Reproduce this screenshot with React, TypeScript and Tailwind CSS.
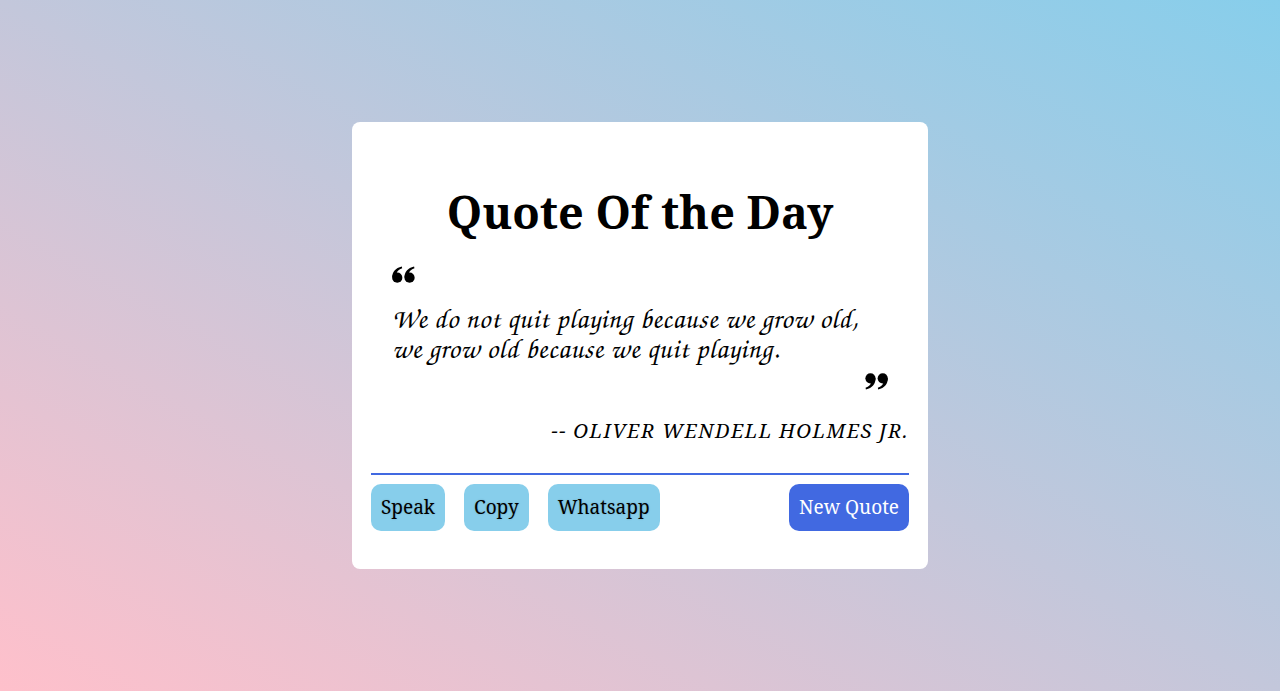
const serif = "font-['Noto_Serif','DejaVu_Serif',serif]";

// two "6" shaped blobs; flipped for the closing mark
const QuoteMark = ({ closing }: { closing?: boolean }) => (
	<svg
		viewBox="0 0 24 18"
		className={`w-[23px] h-[17px] ${closing ? "rotate-180" : ""}`}
		fill="currentColor"
	>
		<circle cx="5.4" cy="12.4" r="5.4" />
		<path d="M0 12.4 C0 6.5 3.5 2 10.2 0.6 L10.6 2.4 C7 3.6 5.2 5.6 4.8 7.6 Z" />
		<circle cx="18.4" cy="12.4" r="5.4" />
		<path d="M13 12.4 C13 6.5 16.5 2 23.2 0.6 L23.6 2.4 C20 3.6 18.2 5.6 17.8 7.6 Z" />
	</svg>
);

const ActionButton = ({ label, primary }: { label: string; primary?: boolean }) => (
	<button
		className={`h-[47px] px-[10px] rounded-[10px] text-[19px] ${serif} ${
			primary
				? "bg-[#4169e1] text-white"
				: "bg-[#87ceeb] text-black [text-shadow:0_0_2px_rgba(0,0,0,0.2)]"
		}`}
	>
		{label}
	</button>
);

export default function App() {
	return (
		<div className="min-h-[691px] w-full flex items-center justify-center bg-[linear-gradient(to_top_right,#ffc0cb,#87ceeb)]">
			<div className="w-[576px] bg-white rounded-[8px] px-[19px] pt-[58px] pb-[38px]">
				<h1 className={`text-center font-bold text-[45px] leading-[64px] text-black ${serif}`}>
					Quote Of the Day
				</h1>
				<div className="px-[21px] mt-[22px]">
					<QuoteMark />
					<p className="mt-[20px] text-[28px] leading-[30px] tracking-[0.6px] font-['TeX_Gyre_Chorus',cursive] text-black">
						We do not quit playing because we grow old, we grow old because we quit playing.
					</p>
					<div className="flex justify-end mt-[10px]">
						<QuoteMark closing />
					</div>
				</div>
				<p className={`mt-[26px] text-right italic uppercase text-[20px] tracking-[1.4px] text-black ${serif}`}>
					-- Oliver Wendell Holmes Jr.
				</p>
				<div className="mt-[27px] border-t-2 border-[#4169e1] pt-[9px] flex items-center gap-[19px]">
					<ActionButton label="Speak" />
					<ActionButton label="Copy" />
					<ActionButton label="Whatsapp" />
					<div className="ml-auto">
						<ActionButton label="New Quote" primary />
					</div>
				</div>
			</div>
		</div>
	);
}
